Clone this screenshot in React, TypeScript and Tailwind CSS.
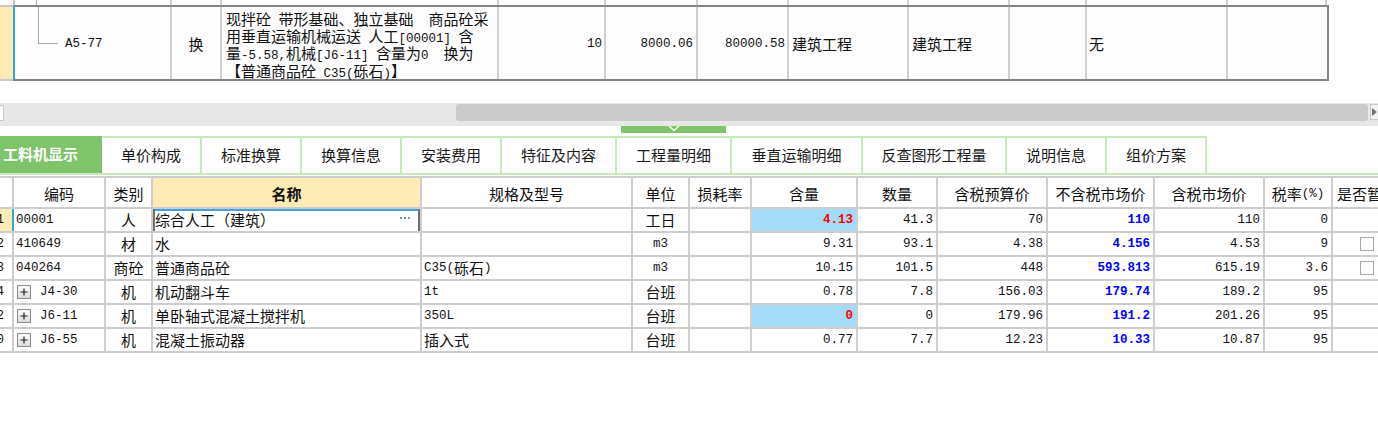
import React from "react";

const CJK = "font-['Noto_Sans_CJK_SC','Noto_Sans_CJK_JP',sans-serif]";
const MONO = "font-['Liberation_Mono','DejaVu_Sans_Mono',monospace] text-[12.5px]";

function Mix({ s }: { s: string }) {
  const parts = s.split(/([\x20-\x7e]+)/).filter((p) => p.length > 0);
  return (
    <>
      {parts.map((p, i) =>
        /^[\x20-\x7e]+$/.test(p) ? (
          <span key={i} className={MONO}>
            {p}
          </span>
        ) : (
          <span key={i}>{p}</span>
        )
      )}
    </>
  );
}

const TOP_W = [
  "w-[157px]",
  "w-[50px]",
  "w-[277px]",
  "w-[107px]",
  "w-[92px]",
  "w-[91px]",
  "w-[120px]",
  "w-[101px]",
  "w-[77px]",
  "w-[141px]",
  "w-[99px]",
];

const COL_W = [
  "w-[14px]",
  "w-[92px]",
  "w-[47px]",
  "w-[269px]",
  "w-[211px]",
  "w-[57px]",
  "w-[62px]",
  "w-[106px]",
  "w-[80px]",
  "w-[110px]",
  "w-[107px]",
  "w-[110px]",
  "w-[68px]",
  "w-[70px]",
];

const HEADERS = [
  "",
  "编码",
  "类别",
  "名称",
  "规格及型号",
  "单位",
  "损耗率",
  "含量",
  "数量",
  "含税预算价",
  "不含税市场价",
  "含税市场价",
  "税率(%)",
  "是否暂估",
];

type Row = {
  n: string;
  code: string;
  plus?: boolean;
  type: string;
  name: string;
  spec: string;
  unit: string;
  qty: string;
  qtyHl?: boolean;
  num: string;
  budget: string;
  mkt: string;
  mktTax: string;
  rate: string;
  chk?: boolean;
};

const ROWS: Row[] = [
  { n: "1", code: "00001", type: "人", name: "综合人工（建筑）", spec: "", unit: "工日", qty: "4.13", qtyHl: true, num: "41.3", budget: "70", mkt: "110", mktTax: "110", rate: "0" },
  { n: "2", code: "410649", type: "材", name: "水", spec: "", unit: "m3", qty: "9.31", num: "93.1", budget: "4.38", mkt: "4.156", mktTax: "4.53", rate: "9", chk: true },
  { n: "3", code: "040264", type: "商砼", name: "普通商品砼", spec: "C35(砾石)", unit: "m3", qty: "10.15", num: "101.5", budget: "448", mkt: "593.813", mktTax: "615.19", rate: "3.6", chk: true },
  { n: "4", code: "J4-30", plus: true, type: "机", name: "机动翻斗车", spec: "1t", unit: "台班", qty: "0.78", num: "7.8", budget: "156.03", mkt: "179.74", mktTax: "189.2", rate: "95" },
  { n: "2", code: "J6-11", plus: true, type: "机", name: "单卧轴式混凝土搅拌机", spec: "350L", unit: "台班", qty: "0", qtyHl: true, num: "0", budget: "179.96", mkt: "191.2", mktTax: "201.26", rate: "95" },
  { n: "0", code: "J6-55", plus: true, type: "机", name: "混凝土振动器", spec: "插入式", unit: "台班", qty: "0.77", num: "7.7", budget: "12.23", mkt: "10.33", mktTax: "10.87", rate: "95" },
];

const TABS: { label: string; w: string }[] = [
  { label: "工料机显示", w: "w-[102px]" },
  { label: "单价构成", w: "w-[100px]" },
  { label: "标准换算", w: "w-[100px]" },
  { label: "换算信息", w: "w-[100px]" },
  { label: "安装费用", w: "w-[100px]" },
  { label: "特征及内容", w: "w-[115px]" },
  { label: "工程量明细", w: "w-[115px]" },
  { label: "垂直运输明细", w: "w-[131px]" },
  { label: "反查图形工程量", w: "w-[144px]" },
  { label: "说明信息", w: "w-[100px]" },
  { label: "组价方案", w: "w-[100px]" },
];

function PlusBox() {
  return (
    <svg width="14" height="14" viewBox="0 0 14 14" className="shrink-0">
      <defs>
        <linearGradient id="pb" x1="0" y1="0" x2="0" y2="1">
          <stop offset="0" stopColor="#fbfbfb" />
          <stop offset="1" stopColor="#d9d9d9" />
        </linearGradient>
      </defs>
      <rect x="0.5" y="0.5" width="13" height="13" fill="url(#pb)" stroke="#8f8f8f" />
      <path d="M3.5 7H10.5M7 3.5V10.5" stroke="#222" strokeWidth="1.2" />
    </svg>
  );
}

const LINE = "border-[#cdcdcd]";
const DESC = [
  "现拌砼 带形基础、独立基础  商品砼采",
  "用垂直运输机械运送 人工[00001] 含",
  "量-5.58,机械[J6-11] 含量为0  换为",
  "【普通商品砼 C35(砾石)】",
];

export default function App() {
  const cellBase = `shrink-0 h-full border-r-2 ${LINE} flex items-center overflow-hidden whitespace-pre`;
  const topCell = "shrink-0 h-full border-r-2 border-[#cfcfcf] flex items-center pt-[3px]";
  return (
    <div className={`w-[1378px] h-[447px] overflow-hidden bg-white text-[15px] text-[#111] ${CJK}`}>
      {/* previous row stub */}
      <div className="flex h-[5px]">
        <div className="w-[15px] shrink-0 h-full border-r-2 border-[#c8c8c8]" />
        <div className="w-[157px] shrink-0 h-full border-r-2 border-[#cfcfcf] pl-[21px]">
          <div className="w-px h-full bg-[#a9a9a9]" />
        </div>
        {TOP_W.slice(1).map((w, i) => (
          <div key={i} className={`${w} shrink-0 h-full border-r-2 border-[#cfcfcf]`} />
        ))}
      </div>

      {/* selected top row */}
      <div className="flex h-[76px]">
        <div className="w-[13px] shrink-0 h-full bg-[#fdeab4] border-y-2 border-[#c9c9c9]" />
        <div className="w-[1316px] shrink-0 h-full flex border-2 border-[#858585] border-l-[#2ea6df] bg-[#fdfdfd]">
          <div className={`${TOP_W[0]} ${topCell} relative pl-[50px]`}>
            <div className="absolute left-[23px] top-0 w-px h-[36px] bg-[#a9a9a9]" />
            <div className="absolute left-[23px] top-[36px] w-[20px] h-px bg-[#a9a9a9]" />
            <span className={MONO}>A5-77</span>
          </div>
          <div className={`${TOP_W[1]} ${topCell} justify-center`}>换</div>
          <div className={`${TOP_W[2]} shrink-0 h-full border-r-2 border-[#cfcfcf] pl-[4px] pt-[3px] whitespace-pre`}>
            {DESC.map((l, i) => (
              <div key={i} className="h-[17.2px] leading-[17.2px]">
                <Mix s={l} />
              </div>
            ))}
          </div>
          <div className={`${TOP_W[3]} ${topCell} justify-end pr-[2px]`}>
            <span className={MONO}>10</span>
          </div>
          <div className={`${TOP_W[4]} ${topCell} justify-end pr-[3px]`}>
            <span className={MONO}>8000.06</span>
          </div>
          <div className={`${TOP_W[5]} ${topCell} justify-end pr-[2px]`}>
            <span className={MONO}>80000.58</span>
          </div>
          <div className={`${TOP_W[6]} ${topCell} pl-[3px]`}>建筑工程</div>
          <div className={`${TOP_W[7]} ${topCell} pl-[3px]`}>建筑工程</div>
          <div className={`${TOP_W[8]} ${topCell}`} />
          <div className={`${TOP_W[9]} ${topCell} pl-[2px]`}>无</div>
          <div className={`${TOP_W[10]} shrink-0 h-full`} />
        </div>
      </div>

      {/* gap */}
      <div className="h-[22px]" />

      {/* horizontal scrollbar */}
      <div className="flex items-start h-[23px] bg-[#e7e7e7] pt-[1px]">
        <div className="w-[4px] h-[16px] mt-[1px] bg-white border border-l-0 border-[#c4c4c4] rounded-r-[2px] shrink-0" />
        <div className="w-[452px] shrink-0" />
        <div className="w-[912px] h-[17px] bg-[#cbcbcb] rounded-[3px] shrink-0" />
        <div className="w-[2px] shrink-0" />
        <div className="w-[8px] h-[16px] bg-[#f4f4f4] border border-r-0 border-[#c4c4c4] shrink-0 flex items-center justify-center">
          <svg width="5" height="8" viewBox="0 0 5 8">
            <path d="M0 0L5 4L0 8Z" fill="#707070" />
          </svg>
        </div>
      </div>

      {/* splitter handle */}
      <div className="h-[9px] flex">
        <div className="ml-[621px] w-[105px] h-[7px] bg-[#7dc46b] flex justify-center">
          <svg width="12" height="6" viewBox="0 0 12 6">
            <path d="M1 0L6 4.5L11 0" stroke="#ffffff" strokeWidth="1.4" fill="none" />
          </svg>
        </div>
      </div>

      {/* tabs */}
      <div className="flex h-[40px] pt-[1px] border-b-2 border-[#c6eab9]">
        {TABS.map((t, i) =>
          i === 0 ? (
            <div key={i} className={`${t.w} shrink-0 h-full bg-[#7dc46b] text-white font-bold flex items-center pl-[3px]`}>
              {t.label}
            </div>
          ) : (
            <div key={i} className={`${t.w} shrink-0 h-full border-t-2 border-r-2 border-[#c6eab9] flex items-center justify-center text-[#1a1a1a]`}>
              {t.label}
            </div>
          )
        )}
      </div>

      <div className="h-px" />

      {/* header */}
      <div className={`flex h-[33px] border-y-2 ${LINE}`}>
        {HEADERS.map((h, i) => (
          <div
            key={i}
            className={`${COL_W[i]} ${cellBase} justify-center pt-[3px] ${i === 3 ? "bg-[#fdeab4] font-bold" : ""}`}
          >
            <Mix s={h} />
          </div>
        ))}
      </div>

      {/* body rows */}
      {ROWS.map((r, ri) => {
        const first = ri === 0;
        return (
          <div key={ri} className={`flex h-[24px] border-b-2 ${LINE}`}>
            <div className={`${COL_W[0]} ${cellBase} justify-end pr-[8px] ${first ? "bg-[#fdeab4] border-r-[#2ea6df]" : ""}`}>
              <span className={MONO}>{r.n}</span>
            </div>
            <div className={`${COL_W[1]} ${cellBase} pl-[2px]`}>
              {r.plus ? (
                <>
                  <span className="ml-[1px] mr-[9px] flex">
                    <PlusBox />
                  </span>
                  <span className={MONO}>{r.code}</span>
                </>
              ) : (
                <span className={MONO}>{r.code}</span>
              )}
            </div>
            <div className={`${COL_W[2]} ${cellBase} justify-center`}>{r.type}</div>
            <div
              className={`${COL_W[3]} ${cellBase} pl-[2px] ${
                first ? "shadow-[inset_2px_0_0_#6f6f6f,inset_-2px_0_0_#6f6f6f,inset_0_2px_0_#3fa3da] justify-between pr-[10px]" : ""
              }`}
            >
              <span>
                <Mix s={r.name} />
              </span>
              {first ? (
                <span className="flex gap-[2px] mt-[-4px]">
                  <span className="w-[2px] h-[2px] bg-[#7b98c6]" />
                  <span className="w-[2px] h-[2px] bg-[#7b98c6]" />
                  <span className="w-[2px] h-[2px] bg-[#7b98c6]" />
                </span>
              ) : null}
            </div>
            <div className={`${COL_W[4]} ${cellBase} pl-[2px]`}>
              <Mix s={r.spec} />
            </div>
            <div className={`${COL_W[5]} ${cellBase} justify-center`}>
              <Mix s={r.unit} />
            </div>
            <div className={`${COL_W[6]} ${cellBase}`} />
            <div className={`${COL_W[7]} ${cellBase} justify-end pr-[3px] ${r.qtyHl ? "bg-[#a3dbf8]" : ""}`}>
              <span className={`${MONO} ${r.qtyHl ? "text-[#ff0000] font-bold" : ""}`}>{r.qty}</span>
            </div>
            <div className={`${COL_W[8]} ${cellBase} justify-end pr-[3px]`}>
              <span className={MONO}>{r.num}</span>
            </div>
            <div className={`${COL_W[9]} ${cellBase} justify-end pr-[3px]`}>
              <span className={MONO}>{r.budget}</span>
            </div>
            <div className={`${COL_W[10]} ${cellBase} justify-end pr-[3px]`}>
              <span className={`${MONO} text-[#0000ff] font-bold`}>{r.mkt}</span>
            </div>
            <div className={`${COL_W[11]} ${cellBase} justify-end pr-[3px]`}>
              <span className={MONO}>{r.mktTax}</span>
            </div>
            <div className={`${COL_W[12]} ${cellBase} justify-end pr-[3px]`}>
              <span className={MONO}>{r.rate}</span>
            </div>
            <div className={`${COL_W[13]} ${cellBase} pl-[27px]`}>
              {r.chk ? <div className="w-[14px] h-[14px] border border-[#a8a8a8] bg-white" /> : null}
            </div>
          </div>
        );
      })}
    </div>
  );
}
